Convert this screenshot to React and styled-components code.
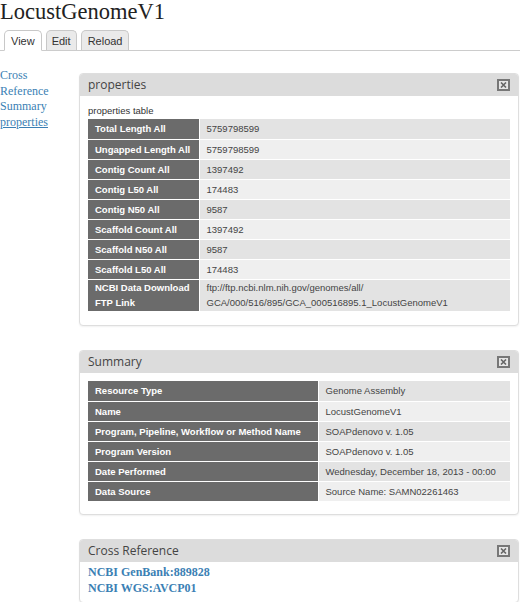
import React from "react";
import styled, { createGlobalStyle } from "styled-components";

const GlobalStyle = createGlobalStyle`
  body {
    margin: 0;
    background: #fff;
    font-family: "Liberation Sans", Arial, sans-serif;
    color: #333;
  }
`;

const Page = styled.div`
  width: 520px;
`;

const Title = styled.h1`
  margin: 0;
  font-family: "Liberation Serif", "DejaVu Serif", serif;
  font-weight: normal;
  font-size: 22.5px;
  line-height: 24px;
  color: #222;
`;

const Tabs = styled.ul`
  display: flex;
  gap: 4px;
  margin: 6px 0 0;
  padding: 0 0 0 4px;
  list-style: none;
  border-bottom: 1px solid #ccc;
  height: 20px;
`;

const Tab = styled.li`
  box-sizing: border-box;
  height: ${(p) => (p.active ? "21px" : "20px")};
  padding: 0 ${(p) => p.pad}px;
  border: 1px solid #c8c8c8;
  border-bottom: ${(p) => (p.active ? "1px solid #fff" : "none")};
  border-radius: 5px 5px 0 0;
  background: ${(p) => (p.active ? "#fff" : "#eaeaea")};
  font-size: 11px;
  line-height: 20px;
  color: #333;
`;

const Main = styled.div`
  display: flex;
  padding-top: 16px;
`;

const Sidebar = styled.nav`
  width: 79px;
  flex-shrink: 0;
  display: flex;
  flex-direction: column;
  font-family: "Liberation Serif", "DejaVu Serif", serif;
  font-size: 12px;
  line-height: 15.5px;
  padding-top: 1px;
`;

const SideLink = styled.a`
  color: #3b7fb4;
  text-decoration: ${(p) => (p.current ? "underline" : "none")};
`;

const Content = styled.div`
  width: 440px;
  display: flex;
  flex-direction: column;
  gap: 24px;
  padding-top: 6px;
`;

const Panel = styled.section`
  border: 1px solid #dedede;
  border-radius: 4px;
  box-shadow: 0 1px 2px rgba(0, 0, 0, 0.06);
  background: #fff;
`;

const PanelHeader = styled.header`
  position: relative;
  height: 22px;
  background: #dcdcdc;
  border-radius: 3px 3px 0 0;
  padding-left: 8px;
  font-family: "Open Sans", "DejaVu Sans", sans-serif;
  font-size: 12px;
  line-height: 22px;
  color: #444;
`;

const CloseBox = styled.span`
  position: absolute;
  right: 8px;
  top: 5px;
  box-sizing: border-box;
  width: 13px;
  height: 12px;
  border: 2px solid #777;
  background: #e6e6e6;
  display: flex;
  align-items: center;
  justify-content: center;
`;

const PanelBody = styled.div`
  padding: ${(p) => p.pad};
`;

const Caption = styled.div`
  font-size: 9.5px;
  line-height: 12px;
  color: #333;
  margin-bottom: 2px;
`;

const Table = styled.table`
  width: 100%;
  border-collapse: collapse;
  table-layout: fixed;
  font-size: 9.5px;
`;

const Row = styled.tr`
  border-bottom: 1px solid #fff;
  &:last-child {
    border-bottom: none;
  }
`;

const HeadCell = styled.th`
  box-sizing: border-box;
  width: ${(p) => p.w}px;
  background: #6b6b6b;
  color: #fff;
  font-weight: bold;
  text-align: left;
  padding: 0 7px;
  height: ${(p) => p.h || 20}px;
  line-height: 15px;
  white-space: nowrap;
  border-right: 1px solid #fff;
`;

const ValueCell = styled.td`
  background: ${(p) => (p.odd ? "#efefef" : "#e3e3e3")};
  color: #444;
  padding: 0 7px;
  line-height: 15px;
  white-space: nowrap;
`;

const RefList = styled.div`
  display: flex;
  flex-direction: column;
  padding: 2px 8px 6px;
  font-family: "Liberation Serif", "DejaVu Serif", serif;
  font-size: 12px;
  line-height: 16px;
`;

const RefLink = styled.a`
  color: #3b7fb4;
  text-decoration: none;
  font-weight: bold;
`;

const properties = [
  ["Total Length All", "5759798599"],
  ["Ungapped Length All", "5759798599"],
  ["Contig Count All", "1397492"],
  ["Contig L50 All", "174483"],
  ["Contig N50 All", "9587"],
  ["Scaffold Count All", "1397492"],
  ["Scaffold N50 All", "9587"],
  ["Scaffold L50 All", "174483"],
  [
    ["NCBI Data Download", <br key="b" />, "FTP Link"],
    ["ftp://ftp.ncbi.nlm.nih.gov/genomes/all/", <br key="b" />, "GCA/000/516/895/GCA_000516895.1_LocustGenomeV1"],
    32,
  ],
];

const summary = [
  ["Resource Type", "Genome Assembly"],
  ["Name", "LocustGenomeV1"],
  ["Program, Pipeline, Workflow or Method Name", "SOAPdenovo v. 1.05"],
  ["Program Version", "SOAPdenovo v. 1.05"],
  ["Date Performed", "Wednesday, December 18, 2013 - 00:00"],
  ["Data Source", "Source Name: SAMN02261463"],
];

function Close() {
  return (
    <CloseBox>
      <svg width="7" height="6" viewBox="0 0 7 6">
        <path d="M1 0.5 L6 5.5 M6 0.5 L1 5.5" stroke="#666" strokeWidth="1.6" />
      </svg>
    </CloseBox>
  );
}

function DataTable({ rows, headWidth }) {
  return (
    <Table>
      <tbody>
        {rows.map(([label, value, h], i) => (
          <Row key={i}>
            <HeadCell w={headWidth} h={h}>
              {label}
            </HeadCell>
            <ValueCell odd={i % 2 === 1}>{value}</ValueCell>
          </Row>
        ))}
      </tbody>
    </Table>
  );
}

export default function App() {
  return (
    <Page>
      <GlobalStyle />
      <Title>LocustGenomeV1</Title>
      <Tabs>
        <Tab active pad={6}>View</Tab>
        <Tab pad={5}>Edit</Tab>
        <Tab pad={6}>Reload</Tab>
      </Tabs>
      <Main>
        <Sidebar>
          <SideLink href="#cross">Cross</SideLink>
          <SideLink href="#cross">Reference</SideLink>
          <SideLink href="#summary">Summary</SideLink>
          <SideLink href="#properties" current>
            properties
          </SideLink>
        </Sidebar>
        <Content>
          <Panel id="properties">
            <PanelHeader>
              properties
              <Close />
            </PanelHeader>
            <PanelBody pad="9px 8px 14px">
              <Caption>properties table</Caption>
              <DataTable rows={properties} headWidth={111} />
            </PanelBody>
          </Panel>
          <Panel id="summary">
            <PanelHeader>
              Summary
              <Close />
            </PanelHeader>
            <PanelBody pad="8px 8px 13px">
              <DataTable rows={summary} headWidth={230} />
            </PanelBody>
          </Panel>
          <Panel id="cross">
            <PanelHeader>
              Cross Reference
              <Close />
            </PanelHeader>
            <RefList>
              <RefLink href="#">NCBI GenBank:889828</RefLink>
              <RefLink href="#">NCBI WGS:AVCP01</RefLink>
            </RefList>
          </Panel>
        </Content>
      </Main>
    </Page>
  );
}
